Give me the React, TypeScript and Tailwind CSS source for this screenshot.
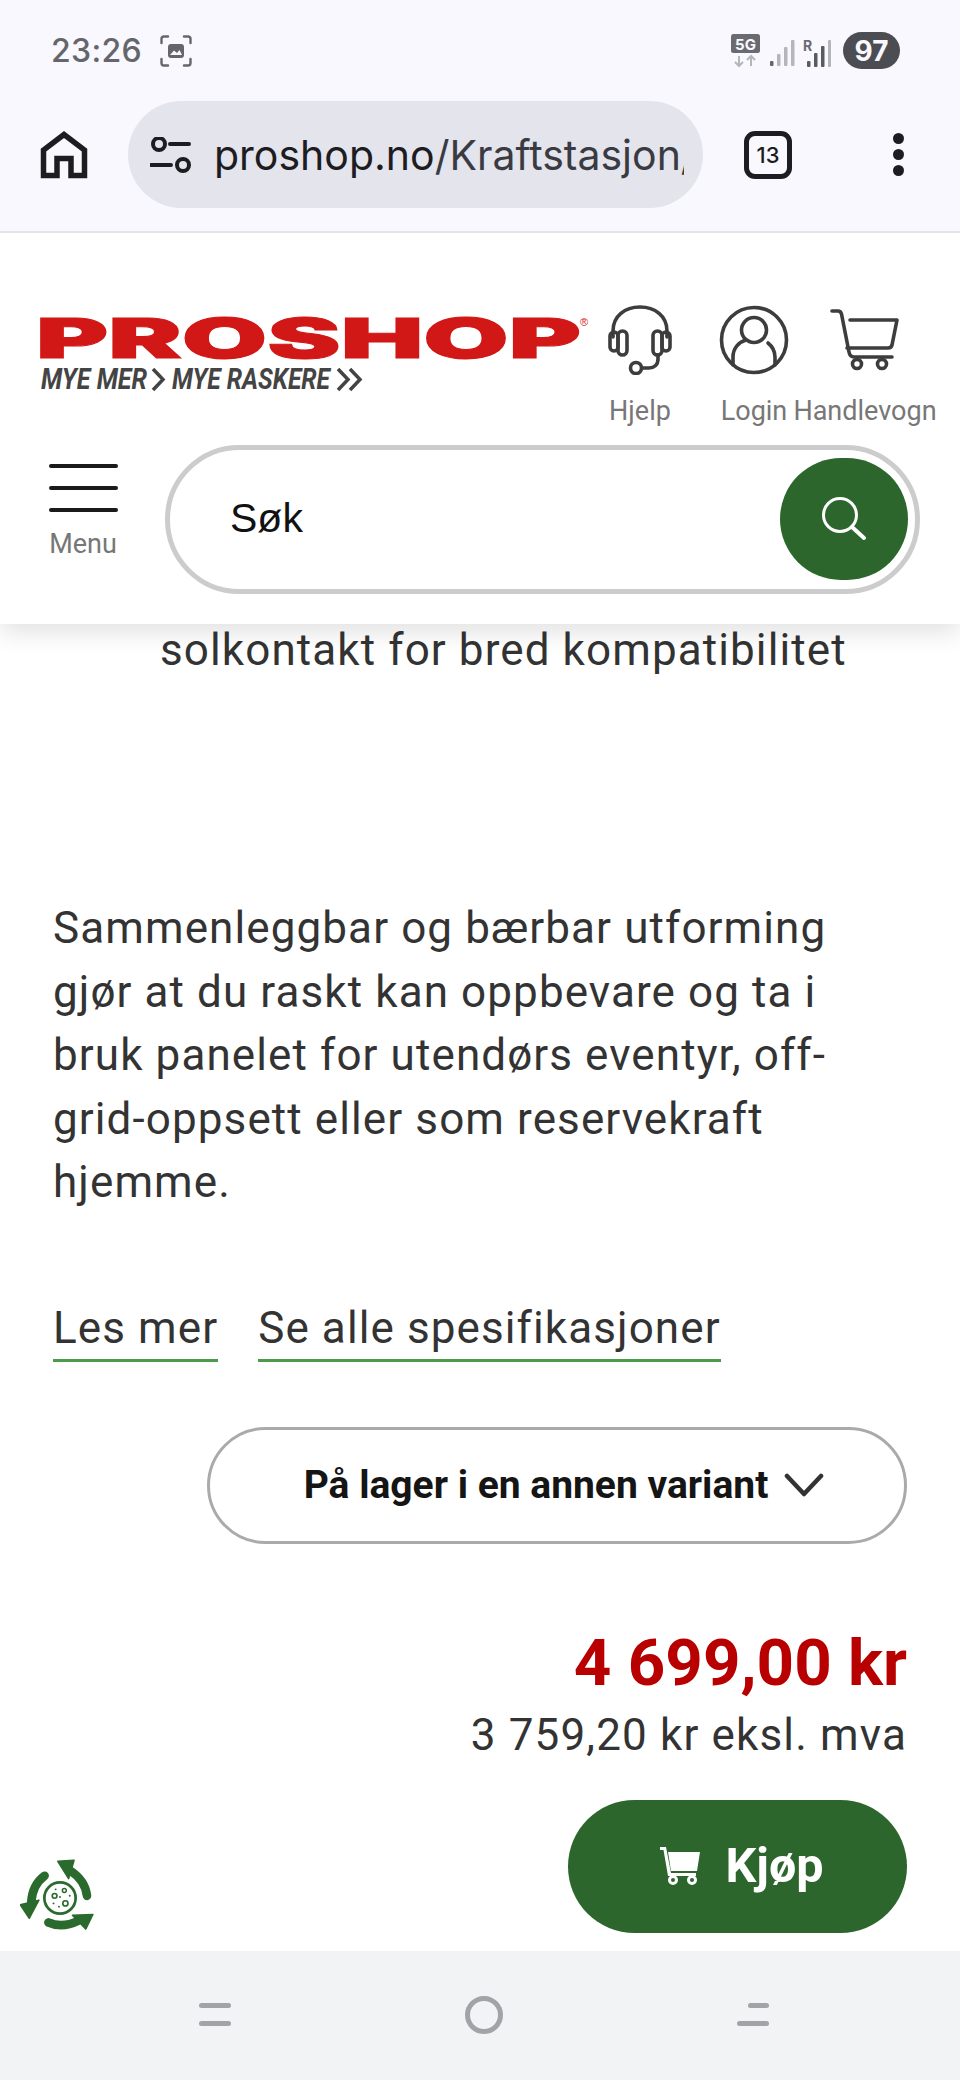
import React from "react";

function Arrow({ r }: { r: number }) {
  return (
    <g transform={`rotate(${r} 37 38)`}>
      <path d="M62 36 C61 27 56 19 47 13" fill="none" stroke="#2a6a2c" strokeWidth="8" strokeLinecap="round" />
      <path d="M50 3 L35 4 L45 20 Z" fill="#2a6a2c" stroke="#2a6a2c" strokeWidth="1.5" strokeLinejoin="round" />
    </g>
  );
}

function Recycle() {
  return (
    <svg width="80" height="82" viewBox="0 0 74 76">
      <Arrow r={0} />
      <Arrow r={120} />
      <Arrow r={240} />
      <circle cx="37" cy="38" r="14.500" fill="white" stroke="#2a6a2c" strokeWidth="2.5" />
      <circle cx="32" cy="36" r="2.2" fill="none" stroke="#2a6a2c" strokeWidth="1.5" />
      <circle cx="41" cy="31" r="1.8" fill="none" stroke="#2a6a2c" strokeWidth="1.4" />
      <circle cx="42" cy="43" r="2.400" fill="none" stroke="#2a6a2c" strokeWidth="1.5" />
      <circle cx="37" cy="37" r="0.9" fill="#2a6a2c" />
      <circle cx="31" cy="43" r="0.9" fill="#2a6a2c" />
      <circle cx="36" cy="46" r="0.9" fill="#2a6a2c" />
      <circle cx="33" cy="30" r="0.9" fill="#2a6a2c" />
      <circle cx="46" cy="36" r="0.9" fill="#2a6a2c" />
    </svg>
  );
}

function Logo() {
  return (
    <svg width="560" height="92" viewBox="0 0 560 92" className="block">
      <text x="0" y="54" textLength="545" lengthAdjust="spacingAndGlyphs" fontFamily="Inter, sans-serif" fontWeight="900" fontSize="55" fill="#d21717" stroke="#d21717" strokeWidth="1">PROSHOP</text>
      <text x="544" y="22" fontFamily="'Liberation Sans', sans-serif" fontSize="11" fill="#d21717">®</text>
      <text x="5" y="85" textLength="106" lengthAdjust="spacingAndGlyphs" fontFamily="'Roboto', sans-serif" fontStyle="italic" fontWeight="700" fontSize="29" fill="#444">MYE MER</text>
      <path d="M117 65 L127 75.500 L117 86" fill="none" stroke="#444" strokeWidth="3.5" />
      <text x="136" y="85" textLength="158" lengthAdjust="spacingAndGlyphs" fontFamily="'Roboto', sans-serif" fontStyle="italic" fontWeight="700" fontSize="29" fill="#444">MYE RASKERE</text>
      <path d="M302 65 L312 75.500 L302 86 M314 65 L324 75.500 L314 86" fill="none" stroke="#444" strokeWidth="3.5" />
    </svg>
  );
}

function Headset() {
  return (
    <svg width="66" height="70" viewBox="0 0 66 70" fill="none" stroke="#3d3d3d" strokeWidth="3.6" strokeLinecap="round" strokeLinejoin="round">
      <path d="M6 32 V26 C6 11 18 2 33 2 C48 2 60 11 60 26 V32" />
      <rect x="3" y="27" width="8" height="19" rx="4" />
      <rect x="11" y="26" width="9" height="24" rx="4.5" />
      <rect x="46" y="26" width="9" height="24" rx="4.5" />
      <rect x="55" y="27" width="8" height="19" rx="4" />
      <path d="M51 50 V54 C51 60 47 63 42 63 H35" />
      <circle cx="29" cy="63" r="5.5" />
    </svg>
  );
}

function Person() {
  return (
    <svg width="70" height="70" viewBox="0 0 70 70" fill="none" stroke="#3d3d3d" strokeWidth="3.6" strokeLinecap="round">
      <circle cx="35" cy="35" r="32.5" />
      <circle cx="35" cy="25" r="12.5" />
      <path d="M14 60 V52 C14 43 20 37 27 35" />
      <path d="M49 38 C54 42 56 47 56 52 V60" />
    </svg>
  );
}

function Cart() {
  return (
    <svg width="70" height="62" viewBox="0 0 70 62" fill="none" stroke="#3d3d3d" strokeWidth="3.6" strokeLinecap="round" strokeLinejoin="round">
      <path d="M2 2 H8 C10 2 11 3 11.5 5 L19 43 C19.500 46 21 48 24 48 H62" />
      <path d="M20 11 H67 L62 36 C61.500 38 60 39 58 39 H17" />
      <circle cx="27" cy="55" r="4.5" />
      <circle cx="52" cy="55" r="4.5" />
    </svg>
  );
}

function HeaderItem({ label, icon, w }: { label: string; icon: React.ReactNode; w: string }) {
  return (
    <div className={`flex flex-col items-center ${w}`}>
      <div className="flex h-[72px] items-center">{icon}</div>
      <span className="mt-[19px] whitespace-nowrap text-[27px] leading-[32px] text-[#777]">{label}</span>
    </div>
  );
}

function NavBars({ top, bottom }: { top: string; bottom: string }) {
  return (
    <div className="flex w-[32px] flex-col items-end gap-[13px]">
      <div className={`h-[5px] rounded-full bg-[#a2a3a6] ${top}`} />
      <div className={`h-[5px] rounded-full bg-[#a2a3a6] ${bottom}`} />
    </div>
  );
}

export default function App() {
  return (
    <div className="flex h-[2080px] w-[960px] flex-col overflow-hidden bg-white font-['Roboto',sans-serif]">
      {/* Phone status bar and browser toolbar */}
      <div className="relative z-20 flex h-[233px] shrink-0 flex-col border-b-[2px] border-[#e3e3eb] bg-[#f8f8fe] font-['Inter',sans-serif]">
        <div className="flex h-[101px] shrink-0 items-center justify-between pl-[51px] pr-[60px]">
          <div className="flex items-center gap-[18px]">
            <span className="text-[32px] font-medium leading-none tracking-[0.3px] text-[#65666b]">23:26</span>
            <svg width="32" height="32" viewBox="0 0 32 32" fill="none" stroke="#65666b" strokeWidth="2.4" strokeLinecap="round">
              <path d="M1.500 8 V4 C1.500 2.500 2.500 1.500 4 1.500 H8 M24 1.500 H28 C29.500 1.500 30.500 2.500 30.500 4 V8 M30.500 24 V28 C30.500 29.500 29.500 30.500 28 30.500 H24 M8 30.500 H4 C2.500 30.500 1.500 29.500 1.500 28 V24" />
              <rect x="8" y="9" width="16" height="14" rx="3" fill="#65666b" stroke="none" />
              <path d="M10 20 L14 15.500 L17 18 L19.500 15 L22 20 Z" fill="#f8f8fe" stroke="none" />
            </svg>
          </div>
          <div className="flex items-center">
            <svg width="30" height="34" viewBox="0 0 30 34">
              <rect x="0" y="0" width="29" height="19" rx="2.500" fill="#6a6b70" />
              <text x="14.500" y="15.500" textAnchor="middle" fontFamily="Inter, sans-serif" fontWeight="700" fontSize="15" fill="#f8f8fe">5G</text>
              <path d="M8 22 V32 M4 28 L8 32 L12 28 M20 32 V22 M16 26 L20 22 L24 26" fill="none" stroke="#b5b6ba" strokeWidth="2" />
            </svg>
            <svg width="25" height="28" viewBox="0 0 25 28" className="ml-[9px] mt-[4px]">
              <rect x="0" y="22" width="3.500" height="5" rx="1" fill="#65666b" />
              <rect x="7" y="15" width="3.500" height="12" rx="1" fill="#b5b6ba" />
              <rect x="14" y="8" width="3.500" height="19" rx="1" fill="#b5b6ba" />
              <rect x="21" y="1" width="3.500" height="26" rx="1" fill="#b5b6ba" />
            </svg>
            <svg width="28" height="30" viewBox="0 0 28 30" className="ml-[8px] mt-[4px]">
              <text x="0" y="13" fontFamily="Inter, sans-serif" fontWeight="700" fontSize="14" fill="#6a6b70">R</text>
              <rect x="4" y="23" width="3.500" height="6" rx="1" fill="#5a5b60" />
              <rect x="11" y="15" width="3.500" height="14" rx="1" fill="#5a5b60" />
              <rect x="18" y="8" width="3.500" height="21" rx="1" fill="#5a5b60" />
              <rect x="25" y="2" width="3" height="27" rx="1" fill="#b5b6ba" />
            </svg>
            <div className="ml-[12px] flex h-[37px] w-[57px] items-center justify-center rounded-full bg-[#4c4d52] text-[28px] font-bold leading-none text-[#f8f8fe]">97</div>
          </div>
        </div>
        <div className="flex h-[107px] shrink-0 items-center pl-[40px]">
          <svg width="48" height="48" viewBox="0 0 48 48" fill="none" stroke="#1c1c21" strokeWidth="5.500" className="shrink-0">
            <path d="M3.500 44.500 V19 L24 3.500 L44.500 19 V44.500 H31 V27.500 H17 V44.500 Z" />
          </svg>
          <div className="ml-[40px] flex h-[107px] w-[575px] shrink-0 items-center overflow-hidden rounded-full bg-[#e4e4ec] pl-[22px]">
            <svg width="42" height="36" viewBox="0 0 42 36" fill="none" stroke="#1c1c21" strokeWidth="4" className="shrink-0">
              <circle cx="9" cy="7" r="6" />
              <path d="M20 7 H39 M1 28 H21" strokeLinecap="round" />
              <circle cx="33" cy="28" r="6" />
            </svg>
            <div className="ml-[22px] w-[470px] overflow-hidden whitespace-nowrap text-[41px] leading-[50px] text-[#3a3b42]">
              <span className="text-[#1c1c21]">proshop.no</span>/Kraftstasjon/
            </div>
          </div>
          <div className="ml-[41px] flex h-[48px] w-[48px] shrink-0 items-center justify-center rounded-[11px] border-[5px] border-[#1c1c21] text-[22px] font-medium leading-none text-[#1c1c21]">13</div>
          <div className="ml-[101px] flex flex-col gap-[5px]">
            <div className="h-[11px] w-[11px] rounded-full bg-[#1c1c21]" />
            <div className="h-[11px] w-[11px] rounded-full bg-[#1c1c21]" />
            <div className="h-[11px] w-[11px] rounded-full bg-[#1c1c21]" />
          </div>
        </div>
      </div>

      {/* Site header */}
      <header className="relative z-10 flex h-[391px] shrink-0 flex-col bg-white font-['Roboto',sans-serif] shadow-[0_8px_24px_rgba(0,0,0,0.12)]">
        <div className="flex h-[212px] items-start pt-[71px]">
          <div className="ml-[36px] w-[560px]">
            <Logo />
          </div>
          <div className="ml-[2px] flex">
            <HeaderItem label="Hjelp" w="w-[84px]" icon={<Headset />} />
            <HeaderItem label="Login" w="w-[74px] ml-[35px]" icon={<Person />} />
            <HeaderItem label="Handlevogn" w="w-[140px] ml-[4px]" icon={<Cart />} />
          </div>
        </div>
        <div className="flex items-start">
          <div className="ml-[48px] mt-[19px] flex w-[70px] flex-col items-center">
            <div className="h-[4px] w-[69px] rounded-full bg-[#1a1a1a]" />
            <div className="mt-[18px] h-[4px] w-[69px] rounded-full bg-[#1a1a1a]" />
            <div className="mt-[18px] h-[4px] w-[69px] rounded-full bg-[#1a1a1a]" />
            <span className="mt-[16px] text-[27px] leading-[32px] text-[#777]">Menu</span>
          </div>
          <div className="ml-[47px] flex h-[149px] w-[755px] items-center justify-between rounded-full border-[5px] border-[#cccccc] bg-white pb-[2px] pl-[60px] pr-[7px]">
            <span className="font-['Liberation_Sans',sans-serif] text-[41px] text-[#111]">Søk</span>
            <div className="flex h-[122px] w-[128px] items-center justify-center rounded-full bg-[#2c662d]">
              <svg width="46" height="46" viewBox="0 0 46 46" fill="none" stroke="white" strokeWidth="3" strokeLinecap="round">
                <circle cx="19" cy="19" r="16.500" />
                <path d="M31 31 L43 42" strokeWidth="4" />
              </svg>
            </div>
          </div>
        </div>
      </header>

      {/* Product content */}
      <main className="relative min-h-0 flex-1 text-[#333]">
        <p className="mt-[1px] pl-[160px] text-[44px] leading-[50px] tracking-[1.1px]">solkontakt for bred kompatibilitet</p>
        <p className="mt-[222px] w-[850px] pl-[53px] text-[44px] leading-[63.6px] tracking-[1.1px]">
          Sammenleggbar og bærbar utforming gjør at du raskt kan oppbevare og ta i bruk panelet for utendørs eventyr, off-grid-oppsett eller som reservekraft hjemme.
        </p>
        <div className="mt-[88px] flex gap-[40px] pl-[53px] text-[44px] leading-[50px] tracking-[1.1px]">
          <span className="border-b-[3px] border-[#4a9c4a] pb-[6px]">Les mer</span>
          <span className="border-b-[3px] border-[#4a9c4a] pb-[6px]">Se alle spesifikasjoner</span>
        </div>
        <div className="mr-[53px] mt-[65px] ml-auto flex h-[117px] w-[700px] items-center justify-center gap-[16px] rounded-full border-[3px] border-[#aaaaaa] pl-[14px]">
          <span className="text-[39px] font-bold leading-none text-[#151515]">På lager i en annen variant</span>
          <svg width="40" height="24" viewBox="0 0 40 24" fill="none" stroke="#333" strokeWidth="4.500" strokeLinecap="round" strokeLinejoin="round">
            <path d="M3 3 L20 21 L37 3" />
          </svg>
        </div>
        <div className="mr-[53px] mt-[84px] text-right text-[65.5px] font-bold leading-[70px] text-[#b90000]">4 699,00 kr</div>
        <div className="mr-[53px] mt-[12px] text-right text-[44px] leading-[50px] tracking-[1.15px] text-[#333]">3 759,20 kr eksl. mva</div>
        <div className="mr-[53px] mt-[40px] ml-auto flex h-[133px] w-[339px] items-center justify-center gap-[24px] rounded-full bg-[#2c662d] pl-[8px]">
          <svg width="42" height="40" viewBox="0 0 42 40">
            <path d="M1 1 H7 L12 27 H37 V30 H9 L4.500 4 H1 Z" fill="white" />
            <path d="M9 6 H41 L38 25 H12 Z" fill="white" />
            <circle cx="14" cy="34" r="3.500" fill="#2c662d" stroke="white" strokeWidth="3" />
            <circle cx="33" cy="34" r="3.500" fill="#2c662d" stroke="white" strokeWidth="3" />
          </svg>
          <span className="text-[48.5px] font-bold leading-none text-white">Kjøp</span>
        </div>
        <div className="absolute bottom-[12px] left-[20px]">
          <Recycle />
        </div>
      </main>

      {/* Android navigation bar */}
      <nav className="flex h-[129px] shrink-0 items-center justify-center gap-[234px] bg-[#f2f3f5] pb-[2px] pl-[8px]">
        <NavBars top="w-[32px]" bottom="w-[32px]" />
        <div className="h-[38px] w-[38px] rounded-full border-[5px] border-[#a2a3a6]" />
        <NavBars top="w-[21px]" bottom="w-[32px]" />
      </nav>
    </div>
  );
}
